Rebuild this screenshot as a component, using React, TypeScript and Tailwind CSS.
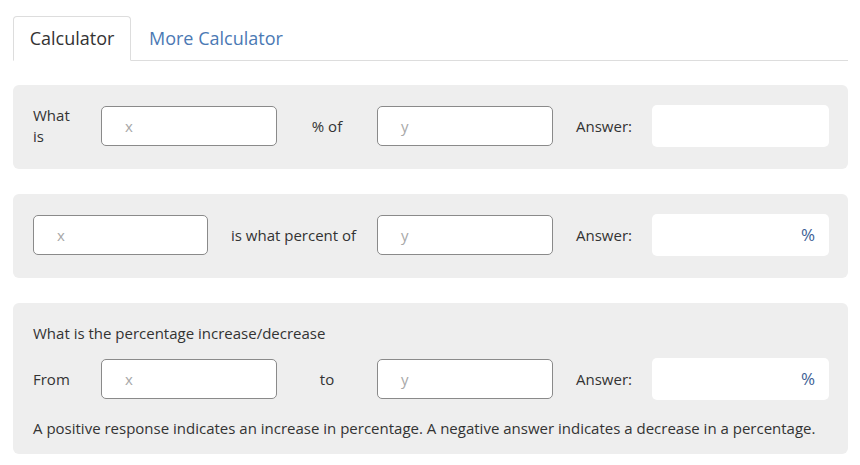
import React from "react";

const font = { fontFamily: '"Open Sans", "Noto Sans", sans-serif' };

function Input({ ph, w = "w-[176px]" }: { ph: string; w?: string }) {
  return (
    <div className={`${w} h-[40px] shrink-0 rounded-[5px] border border-[#8a8a8a] bg-white flex items-center pl-[23px] text-[15px] text-[#a8a8a8]`}>
      {ph}
    </div>
  );
}

function AnswerBox({ pct }: { pct?: boolean }) {
  return (
    <div className="w-[177px] h-[42px] shrink-0 rounded-[5px] bg-white flex items-center justify-end pr-[14px] text-[17px] text-[#3d5f95]">
      {pct ? "%" : ""}
    </div>
  );
}

function AnswerLabel() {
  return <div className="w-[99px] shrink-0 pl-[23px] text-[15px] text-[#333]">Answer:</div>;
}

export default function App() {
  return (
    <div className="w-[860px] h-[465px] bg-white text-[#333]" style={font}>
      <div className="pl-[13px] pr-[12px] pt-[16px]">
        <div className="flex border-b border-[#ddd] h-[45px]">
          <div className="w-[118px] h-[45px] border border-[#ddd] border-b-white rounded-t-[4px] bg-white flex items-center justify-center text-[18px] text-[#333] -mb-px">
            Calculator
          </div>
          <div className="pl-[18px] flex items-center text-[18px] text-[#4b79b4]">More Calculator</div>
        </div>

        <div className="mt-[24px] rounded-[6px] bg-[#eeeeee] pl-[20px] pt-[20px] pb-[22px] flex items-center">
          <div className="w-[68px] shrink-0 text-[15px] leading-[21px]">What<br />is</div>
          <Input ph="x" />
          <div className="w-[100px] shrink-0 text-center text-[15px]">% of</div>
          <Input ph="y" />
          <AnswerLabel />
          <AnswerBox />
        </div>

        <div className="mt-[25px] rounded-[6px] bg-[#eeeeee] pl-[20px] pt-[20px] pb-[22px] flex items-center">
          <Input ph="x" w="w-[175px]" />
          <div className="w-[169px] shrink-0 pl-[23px] text-[15px]">is what percent of</div>
          <Input ph="y" />
          <AnswerLabel />
          <AnswerBox pct />
        </div>

        <div className="mt-[25px] rounded-[6px] bg-[#eeeeee] pl-[20px] pt-[19px] pb-[15px]">
          <div className="text-[15px] leading-[22px]">What is the percentage increase/decrease</div>
          <div className="mt-[14px] flex items-center">
            <div className="w-[68px] shrink-0 text-[15px]">From</div>
            <Input ph="x" />
            <div className="w-[100px] shrink-0 text-center text-[15px]">to</div>
            <Input ph="y" />
            <AnswerLabel />
            <AnswerBox pct />
          </div>
          <div className="mt-[17px] text-[15px] leading-[22px]">
            A positive response indicates an increase in percentage. A negative answer indicates a decrease in a percentage.
          </div>
        </div>
      </div>
    </div>
  );
}
